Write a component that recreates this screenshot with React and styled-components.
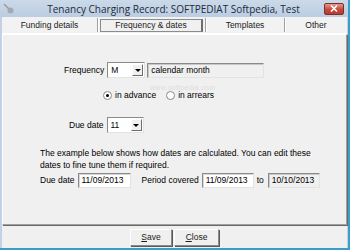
import React from "react";
import styled, { createGlobalStyle } from "styled-components";

const GlobalStyle = createGlobalStyle`
  html, body {
    margin: 0;
    padding: 0;
    background: #3a9ec6;
  }
  * {
    box-sizing: border-box;
  }
`;

const Window = styled.div`
  width: 348px;
  height: 248px;
  background: #c2d2e4;
  display: flex;
  flex-direction: column;
  font-family: "Liberation Sans", Arial, sans-serif;
  font-size: 8.5px;
  color: #000;
  overflow: hidden;
`;

const TitleBar = styled.div`
  height: 17px;
  display: flex;
  align-items: center;
  padding: 0 3px 0 3px;
  background: linear-gradient(#cbd9e9, #bccde1);
`;

const TitleIcon = styled.svg`
  width: 12px;
  height: 12px;
  flex: 0 0 12px;
`;

const Title = styled.div`
  flex: 1;
  text-align: center;
  font-family: "Open Sans", "Liberation Sans", sans-serif;
  font-size: 10px;
  color: #1b2b3c;
  padding-left: 8px;
  white-space: nowrap;
`;

const CloseButton = styled.div`
  width: 20px;
  height: 12px;
  border-radius: 2px;
  border: 1px solid #7b2f2a;
  background: linear-gradient(#e59a8f, #c8473b 55%, #bb3a2e);
  display: flex;
  align-items: center;
  justify-content: center;
  margin-right: 1px;
`;

const Client = styled.div`
  flex: 1;
  margin: 0 1px 0 2px;
  background: #f0f0f0;
  display: flex;
  flex-direction: column;
`;

const TabStrip = styled.div`
  height: 17px;
  display: flex;
  align-items: center;
  background: #f2f2f2;
  border-bottom: 1px solid #ffffff;
`;

const Tab = styled.div`
  width: ${(p) => p.w}px;
  height: 14px;
  display: flex;
  align-items: center;
  justify-content: center;
  color: #1a1a1a;
  border-right: ${(p) => (p.last ? "none" : "1px solid #a0a0a0")};
  box-shadow: ${(p) => (p.last ? "none" : "1px 0 0 #ffffff")};
  padding: 0 2px;
`;

const ActiveTab = styled.div`
  width: 100%;
  height: 13px;
  display: flex;
  align-items: center;
  justify-content: center;
  border: 1px solid #8c8c8c;
  border-right: 2px solid #6d6d6d;
  background: #f0f0f0;
`;

const Panel = styled.div`
  height: 191px;
  margin-right: 0;
  border-top: 1px solid #ffffff;
  border-left: 1px solid #ffffff;
  border-right: 1px solid #a0a0a0;
  border-bottom: 1px solid #a0a0a0;
  box-shadow: 1px 1px 0 #696969;
  display: flex;
  flex-direction: column;
  padding-top: 27px;
`;

const Row = styled.div`
  display: flex;
  align-items: center;
  height: ${(p) => p.h || 16}px;
  margin-top: ${(p) => p.mt || 0}px;
  padding-left: ${(p) => p.indent}px;
  white-space: nowrap;
`;

const Label = styled.span`
  margin-right: ${(p) => p.gap || 3}px;
`;

const Field = styled.div`
  width: ${(p) => p.w}px;
  height: 15px;
  display: flex;
  align-items: center;
  padding-left: 3px;
  background: ${(p) => (p.disabled ? "#f0f0f0" : "#ffffff")};
  border-top: 1px solid #8a8a8a;
  border-left: 1px solid #8a8a8a;
  border-right: 1px solid #e3e3e3;
  border-bottom: 1px solid #e3e3e3;
  box-shadow: inset 1px 1px 0 ${(p) => (p.disabled ? "#c8c8c8" : "#d8d8d8")};
  margin-right: ${(p) => p.mr || 0}px;
`;

const Combo = styled.div`
  width: ${(p) => p.w}px;
  height: 16px;
  display: flex;
  align-items: stretch;
  background: #ffffff;
  border-top: 1px solid #8a8a8a;
  border-left: 1px solid #8a8a8a;
  border-right: 1px solid #e3e3e3;
  border-bottom: 1px solid #e3e3e3;
  margin-right: ${(p) => p.mr || 0}px;
`;

const ComboValue = styled.div`
  flex: 1;
  display: flex;
  align-items: center;
  padding-left: 3px;
`;

const ComboArrow = styled.div`
  width: 11px;
  margin: 1px;
  display: flex;
  align-items: center;
  justify-content: center;
  background: #f0f0f0;
  border-top: 1px solid #ffffff;
  border-left: 1px solid #ffffff;
  border-right: 1px solid #6d6d6d;
  border-bottom: 1px solid #6d6d6d;
  &::after {
    content: "";
    border-left: 3px solid transparent;
    border-right: 3px solid transparent;
    border-top: 3px solid #000;
  }
`;

const Radio = styled.span`
  width: 9px;
  height: 9px;
  border-radius: 50%;
  background: #ffffff;
  border: 1px solid #8a8a8a;
  display: inline-flex;
  align-items: center;
  justify-content: center;
  margin-right: 3px;
  &::after {
    content: "";
    width: 3px;
    height: 3px;
    border-radius: 50%;
    background: ${(p) => (p.checked ? "#000" : "transparent")};
  }
`;

const RadioLabel = styled.span`
  margin-right: ${(p) => p.gap || 0}px;
`;

const Note = styled.p`
  margin: 14px 0 0 37px;
  line-height: 12px;
  width: 280px;
`;

const Footer = styled.div`
  flex: 1;
  display: flex;
  align-items: center;
  justify-content: center;
  padding-top: 1px;
`;

const Button = styled.div`
  width: ${(p) => p.w}px;
  height: 17px;
  display: flex;
  align-items: center;
  justify-content: center;
  background: #f0f0f0;
  border-top: 1px solid #ffffff;
  border-left: 1px solid #ffffff;
  border-right: 1px solid #8a8a8a;
  border-bottom: 1px solid #8a8a8a;
  box-shadow: 1px 1px 0 #5a5a5a;
  margin: 0 1px;
  color: #1a1a1a;
  u {
    text-decoration: underline;
  }
`;

const Watermark = styled.span`
  position: absolute;
  left: 150px;
  top: 84px;
  font-size: 7px;
  color: #dedede;
  letter-spacing: 0.3px;
`;

export default function App() {
  return (
    <>
      <GlobalStyle />
      <Window>
        <TitleBar>
          <TitleIcon viewBox="0 0 12 12">
            <circle cx="7.5" cy="7.5" r="3" fill="#a4a9af" />
            <path d="M1 1 L6 6" stroke="#9aa0a6" strokeWidth="1.6" />
          </TitleIcon>
          <Title>Tenancy Charging Record: SOFTPEDIAT Softpedia, Test</Title>
          <CloseButton>
            <svg width="8" height="7" viewBox="0 0 8 7">
              <path d="M1 0.5 L7 6.5 M7 0.5 L1 6.5" stroke="#fff" strokeWidth="1.6" />
            </svg>
          </CloseButton>
        </TitleBar>
        <Client>
          <TabStrip>
            <Tab w={96}>Funding details</Tab>
            <Tab w={108}>
              <ActiveTab>Frequency &amp; dates</ActiveTab>
            </Tab>
            <Tab w={79}>Templates</Tab>
            <Tab w={62} last>
              Other
            </Tab>
          </TabStrip>
          <Panel>
            <Row indent={61}>
              <Label>Frequency</Label>
              <Combo w={38} mr={2}>
                <ComboValue>M</ComboValue>
                <ComboArrow />
              </Combo>
              <Field w={117} disabled>
                calendar month
              </Field>
            </Row>
            <Watermark>www.softpedia.com</Watermark>
            <Row indent={100} h={12} mt={11}>
              <Radio checked />
              <RadioLabel gap={10}>in advance</RadioLabel>
              <Radio />
              <RadioLabel>in arrears</RadioLabel>
            </Row>
            <Row indent={66} mt={16}>
              <Label>Due date</Label>
              <Combo w={37}>
                <ComboValue>11</ComboValue>
                <ComboArrow />
              </Combo>
            </Row>
            <Note>
              The example below shows how dates are calculated. You can edit these dates to fine
              tune them if required.
            </Note>
            <Row indent={37} mt={1}>
              <Label>Due date</Label>
              <Field w={53} mr={11}>
                11/09/2013
              </Field>
              <Label>Period covered</Label>
              <Field w={52} mr={3}>
                11/09/2013
              </Field>
              <Label gap={4}>to</Label>
              <Field w={52} disabled>
                10/10/2013
              </Field>
            </Row>
          </Panel>
          <Footer>
            <Button w={42}>
              <span>
                <u>S</u>ave
              </span>
            </Button>
            <Button w={45}>
              <span>
                <u>C</u>lose
              </span>
            </Button>
          </Footer>
        </Client>
      </Window>
    </>
  );
}
